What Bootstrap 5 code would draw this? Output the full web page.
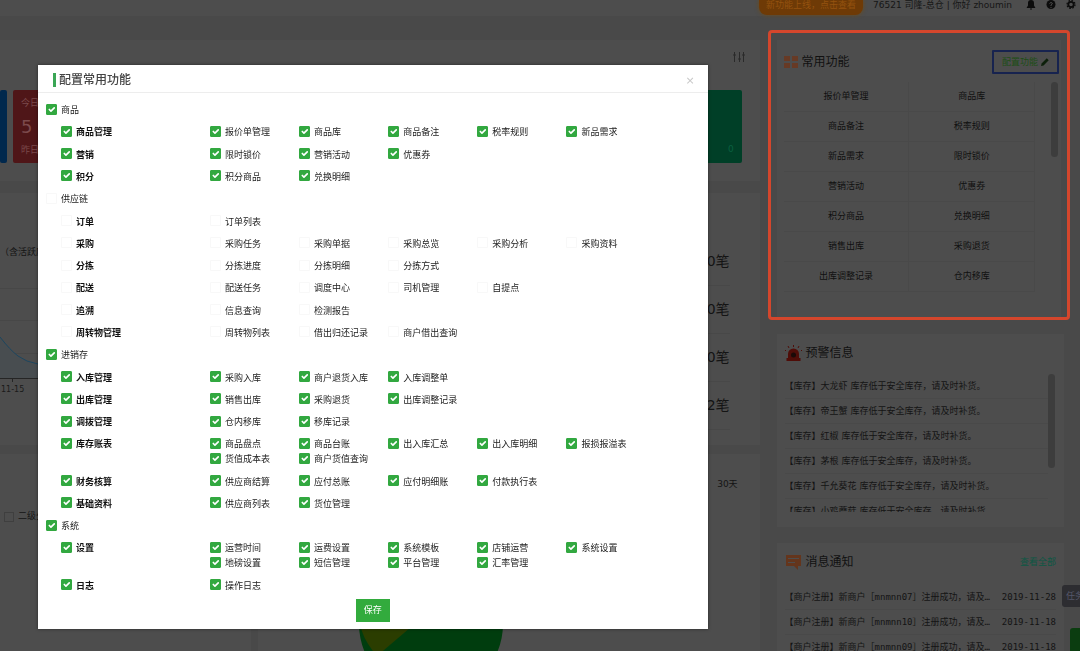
<!DOCTYPE html>
<html lang="zh-CN">
<head>
<meta charset="utf-8">
<meta name="viewport" content="width=device-width, initial-scale=1">
<title>配置常用功能</title>
<link href="https://cdn.jsdelivr.net/npm/bootstrap@5.3.0/dist/css/bootstrap.min.css" rel="stylesheet">
<style>
  body { background: #494949; color: #141414; font: 9px/15px "DejaVu Sans", "Noto Sans CJK SC", sans-serif; height: 100vh; overflow: hidden; }
  .topbar { background: #4d4d4d; height: 16px; padding-right: 4px; gap: 10px; line-height: 10px; }
  .promo { width: 104px; height: 15px; background: #6e3a06; color: #94520f; border-radius: 0 0 8px 8px; box-shadow: 0 0 4px #6b4a18; line-height: 10px; }
  .topbar .who { color: #161616; }
  .panel { background: #4d4d4d; }
  .side { width: 28%; margin-right: 10px; }
  .tiles { gap: 6px; height: 73px; margin: 28px 4px 0 0; }
  .tile { border-radius: 2px; flex: 1 1 0; padding: 6px 8px; }
  .tile-cut { flex: 0 0 7px; background: #00284d; padding: 0; }
  .figure-lg { font-size: 18px; line-height: 32px; }
  .count { height: 48px; font-size: 14px; border-bottom: 1px solid #484848; }
  .focus-box { border: 3px solid #d4462c; border-radius: 4px; margin-top: 14px; padding: 7px 6px 0; }
  .side-title { height: 23px; font-size: 12px; color: #111; padding-top: 1px; }
  .btn-config { width: 67px; height: 24px; padding: 0; font-size: 9px; line-height: 15px; color: #1d4d16; border: 2px solid #17234f; border-radius: 1px; }
  .btn-config:hover { color: #1d4d16; border-color: #17234f; }
  .shortcuts { height: 221px; overflow: hidden; display: grid; grid-template-columns: 1fr 1fr; grid-auto-rows: 30px; flex: 1; }
  .shortcuts a { color: #101010; border: 1px solid #494949; border-width: 0 1px 1px 0; text-decoration: none; display: flex; align-items: center; justify-content: center; }
  .thumb { width: 7px; border-radius: 4px; background: #3d3d3d; margin-right: 1px; }
  .feed li { height: 25px; border-bottom: 1px solid #494949; }
  .feed-clip { height: 138px; overflow: hidden; }
  .mono { font-family: "DejaVu Sans Mono", "Noto Sans CJK SC", monospace; }
  .float-tab { right: 0; top: 585px; width: 18px; height: 22px; background: #2d2d31; color: #55576a; border-radius: 3px 0 0 3px; overflow: hidden; padding: 4px 0 0 4px; }
  .float-chat { right: 0; bottom: 0; width: 10px; height: 23px; background: #0b3d10; border-radius: 3px 0 0 0; }

  .dialog-layer { position: fixed; inset: 0; padding: 65px 0 22px; }
  .dialog-box { width: 62%; margin-left: 38px; background: #fff; color: #222; box-shadow: 0 0 3px rgba(0, 0, 0, .5); }
  .dialog-head { height: 28px; padding: 2px 12px 0 15px; border-bottom: 1px solid #ededed; }
  .dialog-head h1 { font-size: 12px; line-height: 14px; border-left: 3px solid #3aa655; padding-left: 3px; color: #444; }
  .btn-x { font-size: 11px; line-height: 14px; color: #c8c8c8; padding: 0; margin-top: 3px; }
  .tree { padding: 5px 52px 0 8px; }
  .tree-row { flex: 1 1 auto; display: grid; align-content: center; }
  .tree-sub { grid-template-columns: 149px 1fr; padding-left: 15px; }
  .tree-items { display: grid; grid-template-columns: repeat(5, 1fr); }
  .tick { display: flex; align-items: center; gap: 4px; height: 15px; white-space: nowrap; min-width: 0; }
  .tick .form-check-input { width: 11px; height: 11px; margin: 0; border: 1px solid #f8f8f8; border-radius: 1px; background-size: 11px; flex: none; }
  .tick .form-check-input:checked { background-color: #32a840; border-color: #32a840; }
  .tick label { font-family: "Noto Sans CJK SC", sans-serif; padding-top: 1px; }
  .tick-strong label { font-weight: 700; color: #111; }
  .btn-save { width: 34px; height: 23px; padding: 0; font-size: 9px; background: #32ab3d; color: #fff; border: 0; border-radius: 0; }
</style>
</head>
<body class="d-flex flex-column">

<header class="topbar d-flex align-items-start justify-content-end flex-shrink-0">
  <a href="#" class="promo text-center text-decoration-none">新功能上线，点击查看</a>
  <span class="who text-nowrap">76521 司隆-总仓 | 你好 zhoumin</span>
  <svg class="ms-1" width="10" height="10" viewBox="0 0 10 10" fill="#0c0c0c"><path d="M5 0a3 3 0 0 1 3 3v2.500l1.500 2.500h-9L2 5.500V3a3 3 0 0 1 3-3zM4 8.500h2v1H4z"/></svg>
  <svg width="10" height="10" viewBox="0 0 10 10"><circle cx="5" cy="4.500" r="4.500" fill="#0c0c0c"/><path d="M3.500 3.500Q5 1.500 6.400 3.300Q6.200 4.400 5 5v1M5 7v1" stroke="#4d4d4d" fill="none"/></svg>
  <svg width="10" height="10" viewBox="0 0 10 10" fill="none" stroke="#0c0c0c"><circle cx="5" cy="4.500" r="2.700" stroke-width="1.800"/><circle cx="5" cy="4.500" r="4" stroke-width="1.200" stroke-dasharray="1.600 1.540"/></svg>
</header>

<div class="d-flex flex-fill" style="min-height:0">
  <main class="d-flex flex-column flex-fill pt-4 me-2">
    <section class="panel flex-shrink-0" style="height:141px;padding:12px 14px 0 0">
      <svg class="d-block ms-auto" width="14" height="10" viewBox="0 0 14 10" stroke="#2a2a2a"><path d="M2.500 0v10M7.500 0v10M11.500 0v10M1 3h3M6 7h3M10 3h3"/></svg>
      <div class="tiles d-flex">
        <div class="tile tile-cut"></div>
        <div class="tile" style="background:#4f1618;color:#7c4a4c"><div>今日</div><div class="figure-lg">5</div><div>昨日</div></div>
        <div class="tile" style="background:#4d3000"></div>
        <div class="tile" style="background:#00284d"></div>
        <div class="tile" style="background:#2b1b4d"></div>
        <div class="tile d-flex align-items-end justify-content-end" style="background:#003f27;color:#0a6040">0</div>
      </div>
    </section>

    <section class="panel d-flex flex-shrink-0" style="height:252px;margin-top:12px">
      <div style="padding-top:52px">
        <div>（含活跃度）</div>
        <svg width="140" height="140" viewBox="0 0 140 140" fill="none">
          <path d="M0 28.500H140M0 60.500H140M0 93.500H140" stroke="#474747"/>
          <path d="M0 77Q10 90 18 96T38 104L60 108V118H0z" fill="#484d50"/>
          <path d="M0 77Q10 90 18 96T38 104L60 108" stroke="#1c4660"/>
          <path d="M0 118.500H140M12.500 118v4" stroke="#252525"/>
          <text x="1" y="132" font-size="8" fill="#1a1a1a">11-15</text>
        </svg>
      </div>
      <div class="flex-fill text-end" style="padding:45px 30px 0 0">
        <div class="count d-flex align-items-center justify-content-end">0笔</div>
        <div class="count d-flex align-items-center justify-content-end">0笔</div>
        <div class="count d-flex align-items-center justify-content-end">0笔</div>
        <div class="count d-flex align-items-center justify-content-end">2笔</div>
      </div>
    </section>

    <div class="d-flex flex-fill" style="min-height:0;gap:7px;margin-top:9px">
      <section class="panel" style="width:33%;padding:55px 0 0 4px">
        <div class="d-flex align-items-center gap-1"><svg width="10" height="10"><rect x=".5" y=".5" width="9" height="9" fill="none" stroke="#3f3f3f"/></svg>二级分类</div>
      </section>
      <section class="panel flex-fill overflow-hidden" style="padding-top:23px">
        <div class="text-end" style="padding-right:22px">30天</div>
        <svg style="margin:60px 0 0 101px" width="144" height="144" viewBox="0 0 144 144"><circle cx="72" cy="72" r="72" fill="#003d0e"/><path d="M72 58L18 104Q4 88 1 72z" fill="#2b3d00"/></svg>
      </section>
    </div>
  </main>

  <aside class="side flex-shrink-0">
    <div class="focus-box">
      <section class="panel" style="padding:10px 2px 14px 7px">
        <div class="side-title d-flex align-items-center">
          <svg class="me-1" width="14" height="14" viewBox="0 0 14 14" fill="#673a25"><path d="M0 1h6v5H0zM8 1h6v5H8zM0 8h6v5H0zM8 8h6v5H8z"/></svg>
          <span>常用功能</span>
          <button type="button" class="btn btn-config ms-auto">配置功能 <svg width="8" height="8" viewBox="0 0 8 8" fill="#0d200b"><path d="M0 8l.6-2.600L5.800.3l1.900 1.900L2.600 7.400z"/></svg></button>
        </div>
        <div class="d-flex" style="margin-top:9px">
          <nav class="shortcuts" id="shortcuts"></nav>
          <div class="thumb" style="height:75px;margin-left:16px"></div>
        </div>
      </section>
    </div>

    <section class="panel" style="margin:14px 6px 0 9px;padding:7px 8px 15px">
      <div class="side-title d-flex align-items-center">
        <svg class="me-1" width="17" height="17" viewBox="0 0 17 17"><path d="M3 13V9a5.500 5.500 0 0 1 11 0v4h1.500v3H1.500v-3z" fill="#4f0d08"/><circle cx="8.500" cy="10" r="2.500" fill="#1a0a08"/><path d="M8.500 2V0M4 3L3 1M13 3l1-2M1 6L0 5M16 6l1-1" stroke="#4f0d08"/></svg>
        <span>预警信息</span>
      </div>
      <div class="d-flex" style="margin-top:10px">
        <ul class="feed feed-clip list-unstyled flex-fill mb-0 text-nowrap">
          <li class="d-flex align-items-center">【库存】大龙虾 库存低于安全库存，请及时补货。</li>
          <li class="d-flex align-items-center">【库存】帝王蟹 库存低于安全库存，请及时补货。</li>
          <li class="d-flex align-items-center">【库存】红椒 库存低于安全库存，请及时补货。</li>
          <li class="d-flex align-items-center">【库存】茅根 库存低于安全库存，请及时补货。</li>
          <li class="d-flex align-items-center">【库存】千允葵花 库存低于安全库存，请及时补货。</li>
          <li class="d-flex align-items-center">【库存】小鸡蘑菇 库存低于安全库存，请及时补货</li>
        </ul>
        <div class="thumb" style="height:94px"></div>
      </div>
    </section>

    <section class="panel" style="margin:16px 6px 0 9px;padding:7px 8px 15px">
      <div class="side-title d-flex align-items-center">
        <svg class="me-1" width="17" height="15" viewBox="0 0 17 15"><path d="M1 0h15v11h-3v4l-4-4H1z" fill="#64351c"/><path d="M3 3.500h11M3 7.500h7" stroke="#4d4d4d"/></svg>
        <span>消息通知</span>
        <a href="#" class="ms-auto text-decoration-none" style="font-size:9px;color:#0c5744">查看全部</a>
      </div>
      <ul class="feed mono list-unstyled text-nowrap mb-0" style="margin-top:12px">
        <li class="d-flex align-items-center justify-content-between"><span>【商户注册】新商户［mnmnn07］注册成功，请及…</span><time>2019-11-28</time></li>
        <li class="d-flex align-items-center justify-content-between"><span>【商户注册】新商户［mnmnn10］注册成功，请及…</span><time>2019-11-18</time></li>
        <li class="d-flex align-items-center justify-content-between"><span>【商户注册】新商户［mnmnn09］注册成功，请及…</span><time>2019-11-18</time></li>
      </ul>
    </section>
  </aside>
</div>

<div class="float-tab position-fixed text-nowrap">任务</div>
<div class="float-chat position-fixed"></div>

<div class="dialog-layer d-flex">
  <div class="dialog-box d-flex flex-column" role="dialog" aria-labelledby="dlgTitle">
    <div class="dialog-head d-flex align-items-center justify-content-between flex-shrink-0">
      <h1 class="mb-0" id="dlgTitle">配置常用功能</h1>
      <button type="button" class="btn btn-x" aria-label="关闭">×</button>
    </div>
    <form class="d-flex flex-column flex-fill">
      <div class="tree d-flex flex-column flex-fill" id="tree"></div>
      <div class="text-center" style="padding:3px 0 7px"><button type="button" class="btn btn-save">保存</button></div>
    </form>
  </div>
</div>

<script>
  const groups = [
    ['商品', true, [
      ['商品管理', '报价单管理 商品库 商品备注 税率规则 新品需求'],
      ['营销', '限时锁价 营销活动 优惠券'],
      ['积分', '积分商品 兑换明细']]],
    ['供应链', false, [
      ['订单', '订单列表'],
      ['采购', '采购任务 采购单据 采购总览 采购分析 采购资料'],
      ['分拣', '分拣进度 分拣明细 分拣方式'],
      ['配送', '配送任务 调度中心 司机管理 自提点'],
      ['追溯', '信息查询 检测报告'],
      ['周转物管理', '周转物列表 借出归还记录 商户借出查询']]],
    ['进销存', true, [
      ['入库管理', '采购入库 商户退货入库 入库调整单'],
      ['出库管理', '销售出库 采购退货 出库调整记录'],
      ['调拨管理', '仓内移库 移库记录'],
      ['库存账表', '商品盘点 商品台账 出入库汇总 出入库明细 报损报溢表 货值成本表 商户货值查询'],
      ['财务核算', '供应商结算 应付总账 应付明细账 付款执行表'],
      ['基础资料', '供应商列表 货位管理']]],
    ['系统', true, [
      ['设置', '运营时间 运费设置 系统模板 店铺运营 系统设置 地磅设置 短信管理 平台管理 汇率管理'],
      ['日志', '操作日志']]]
  ];
  let n = 0;
  const tick = (text, on, cls = '') => {
    const id = 'f' + (++n);
    return `<div class="tick ${cls}"><input class="form-check-input" type="checkbox" id="${id}"${on ? ' checked' : ''}><label for="${id}">${text}</label></div>`;
  };
  document.getElementById('tree').innerHTML = groups.map(([name, on, subs]) =>
    `<div class="tree-row">${tick(name, on)}</div>` + subs.map(([sub, items]) =>
      `<div class="tree-row tree-sub">${tick(sub, on, 'tick-strong')}<div class="tree-items">${items.split(' ').map(i => tick(i, on)).join('')}</div></div>`
    ).join('')).join('');

  document.getElementById('shortcuts').innerHTML =
    '报价单管理 商品库 商品备注 税率规则 新品需求 限时锁价 营销活动 优惠券 积分商品 兑换明细 销售出库 采购退货 出库调整记录 仓内移库'
      .split(' ').map(t => `<a href="#">${t}</a>`).join('');
</script>
<script src="https://cdn.jsdelivr.net/npm/bootstrap@5.3.0/dist/js/bootstrap.bundle.min.js"></script>
</body>
</html>
